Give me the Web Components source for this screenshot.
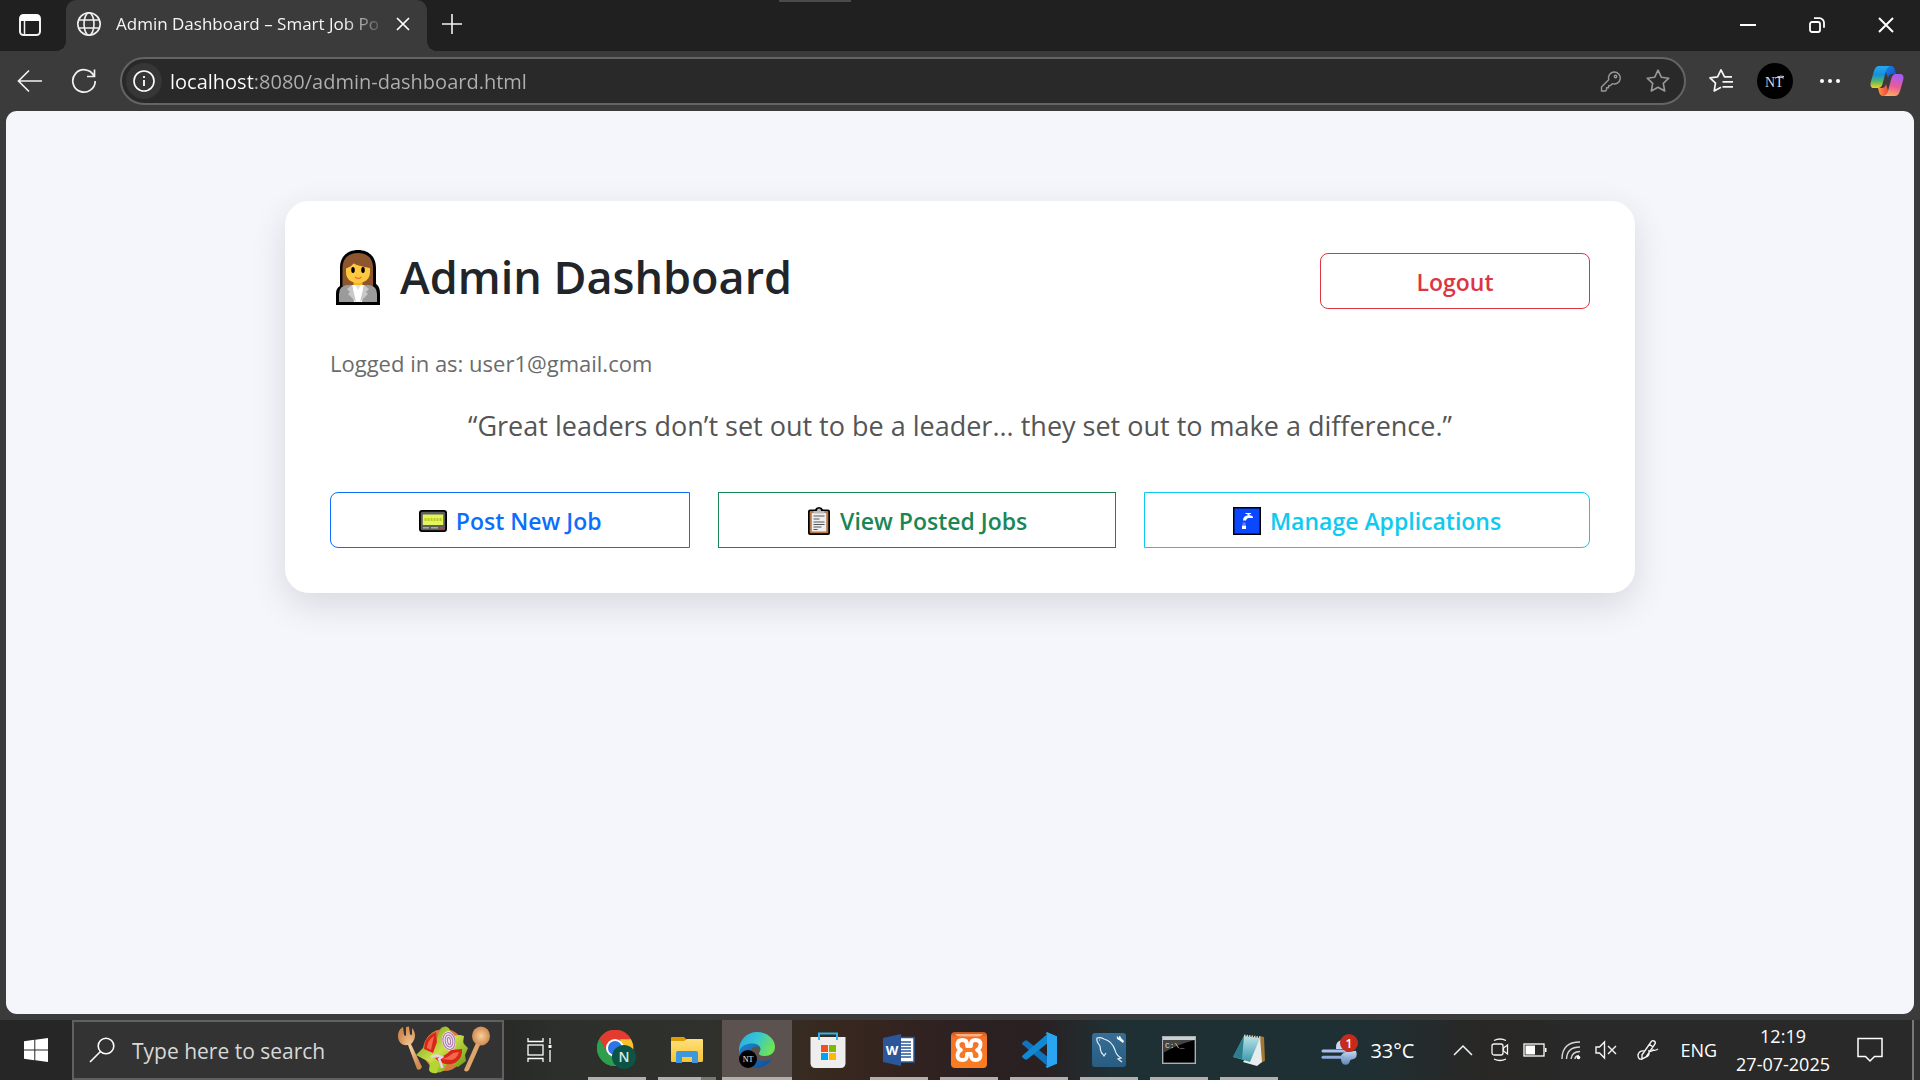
<!DOCTYPE html>
<html lang="en">
<head>
<meta charset="utf-8">
<title>Admin Dashboard – Smart Job Portal</title>
<style>
  html, body { margin: 0; height: 100%; }
  body { font-family: "Open Sans", "Noto Sans", sans-serif; background: #3b3b3b; overflow: hidden; }
</style>
</head>
<body>
<desktop-screen></desktop-screen>
<script>
const ICONS = {
  workspaces: [24, 24, `<g fill="none" stroke="#f2f2f2" stroke-width="2"><rect x="2" y="2" width="20" height="20" rx="3.5"/><path d="M6.5 7v15" stroke-width="1.5"/></g><path d="M2 8V5a3.500 3.500 0 0 1 3.500-3.500h13A3.500 3.500 0 0 1 22 5v3z" fill="#fff"/>`],
  globe: [26, 26, `<g fill="none" stroke="#f0f0f0" stroke-width="1.6"><circle cx="13" cy="13" r="11.2"/><ellipse cx="13" cy="13" rx="5" ry="11.200"/><path d="M3 9h20M3 17h20"/></g>`],
  tabclose: [16, 16, `<path d="M2 2l12 12M14 2L2 14" stroke="#fff" stroke-width="1.7" fill="none"/>`],
  plus: [22, 22, `<path d="M11 1v20M1 11h20" stroke="#f2f2f2" stroke-width="1.6" fill="none"/>`],
  minimize: [16, 16, `<path d="M0 8h16" stroke="#fff" stroke-width="2"/>`],
  restore: [18, 18, `<g fill="none" stroke="#fff" stroke-width="1.8"><rect x="2" y="6" width="10" height="10" rx="2"/><path d="M6 2.200h5.500a4.500 4.500 0 0 1 4.500 4.500v5" /></g>`],
  close: [18, 18, `<path d="M2 2l14 14M16 2L2 16" stroke="#fff" stroke-width="2" fill="none"/>`],
  back: [26, 24, `<path d="M25 12H2M12 1.500L1.500 12 12 22.500" stroke="#f2f2f2" stroke-width="1.700" fill="none"/>`],
  reload: [26, 26, `<path d="M22.800 7.500A11.200 11.200 0 1 0 24.200 13M23.500 1.500v7h-7.500" stroke="#f2f2f2" stroke-width="1.700" fill="none"/>`],
  info: [36, 36, `<circle cx="18" cy="18" r="18" fill="#363636"/><circle cx="18" cy="18" r="10" fill="none" stroke="#fff" stroke-width="1.600"/><path d="M18 17v6M18 13v2" stroke="#fff" stroke-width="1.800"/>`],
  key: [22, 22, `<g fill="none" stroke="#999" stroke-width="1.400" stroke-linejoin="round"><path d="M14 2a6 6 0 1 1-1.600 11.700L10.500 15.600H8.600v2.100H6.500v2.200L5.500 21H1.500v-4l7.200-7.200A6 6 0 0 1 14 2z"/><circle cx="15.500" cy="6.500" r="1.200"/></g>`],
  star: [26, 26, `<path d="M13 2.200l3.300 7 7.500 1-5.500 5.200 1.400 7.600L13 19.300 6.300 23l1.400-7.600L2.200 10.200l7.500-1z" fill="none" stroke="#999" stroke-width="1.600" stroke-linejoin="round"/>`],
  favorites: [26, 26, `<path d="M24 8.800h-7.500L13 1.800l-3.400 7-7.600 1.100 5.500 5.300-1.300 7.700L13 19.300M14.500 13.800H25M14.500 18.800H25" fill="none" stroke="#f5f5f5" stroke-width="1.700" stroke-linejoin="round"/>`],
  avatar: [36, 36, `<circle cx="18" cy="18" r="18" fill="#000"/><text x="8" y="24" font-family="Liberation Serif" font-size="14" fill="#d8d8d8">NT</text><path d="M20 14q4-1.500 7-.5" stroke="#d8d8d8" fill="none"/>`],
  dots: [20, 6, `<g fill="#fff"><circle cx="2" cy="3" r="2"/><circle cx="10" cy="3" r="2"/><circle cx="18" cy="3" r="2"/></g>`],
  copilot: [34, 32, `<defs><linearGradient id="a" x1="0" y1="0" x2="0" y2="1"><stop offset="0" stop-color="#27a7f5"/><stop offset=".4" stop-color="#1690d8"/><stop offset=".7" stop-color="#58b86a"/><stop offset="1" stop-color="#f8d11c"/></linearGradient><linearGradient id="b" x1=".3" y1="0" x2=".1" y2="1"><stop offset="0" stop-color="#a45cf5"/><stop offset=".5" stop-color="#ee5a96"/><stop offset="1" stop-color="#ffb45a"/></linearGradient><linearGradient id="c" x1="0" y1="0" x2="1" y2="1"><stop offset="0" stop-color="#1a8ae8"/><stop offset="1" stop-color="#1648c8"/></linearGradient><linearGradient id="d" x1="0" y1="0" x2="1" y2="0"><stop offset="0" stop-color="#ff9a3a"/><stop offset="1" stop-color="#e8334a"/></linearGradient></defs><path d="M14 1h7q3 0 4 4l1 4h-4q-3 0-4 4z" fill="url(#c)"/><path d="M20 31h-7q-3 0-4-4l-1-4h4q3 0 4-4z" fill="url(#d)"/><path d="M9 1h11q-3 1-4 5l-3.500 13q-1.200 4-4.500 4H4Q-.5 23 .8 17L4 6Q5.500 1 9 1z" fill="url(#a)"/><path d="M25 31H14q3-1 4-5l3.500-13q1.200-4 4.500-4h4q4.500 0 3.200 6L30 26q-1.500 5-5 5z" fill="url(#b)"/>`],
  admin: [46, 56, `<path d="M5 37V19C5 7 13 1 23 1s18 6 18 18v16c3 2 4 5 4 10v11H1V45c0-4 1-6 4-8z" fill="#000"/><path d="M7.500 37V19C7.500 9 14 4 23 4s15 5 15 15v18z" fill="#8e562e"/><path d="M18.500 28h9v12h-9z" fill="#f5b51b"/><path d="M11 19q5-1 7-5 5 3 17 5v4c0 7-5 11-12 11s-12-4-12-11z" fill="#ffc83d"/><path d="M10 20V14q4-6 13-6t13 6v6l-4-3-1-2-2 2-7-1-3-2-3 3z" fill="#8e562e"/><ellipse cx="18" cy="21" rx="1.800" ry="3"/><ellipse cx="28" cy="21" rx="1.800" ry="3"/><path d="M20 28q3 3 6.500 0" stroke="#e27746" stroke-width="1.300" fill="none"/><path d="M4 53v-8q0-8 8-9h22q8 1 8 9v8z" fill="#9b9b9b"/><path d="M17 36h12l-2 17h-8z" fill="#fff"/><path d="M17 36l-5 4 3 3-2 2 8 8-4-17zM29 36l5 4-3 3 2 2-8 8 4-17z" fill="#c8c8c8"/><path d="M20 36l3 5 3-5z" fill="#e2e2e2"/>`],
  pager: [28, 22, `<rect width="28" height="22" rx="3" fill="#000"/><rect x="1.800" y="1.800" width="24.400" height="18.400" rx="1.500" fill="#5e5e5e"/><rect x="3.800" y="4.500" width="20.400" height="10.500" fill="#e2f65b"/><path d="M5.500 9.500h17" stroke="#bcc92a" stroke-width="3" stroke-dasharray="2 1"/><path d="M4 17.700h6M12 17.700h7" stroke="#aaa" stroke-width="1.600"/><path d="M21 17.700h3" stroke="#e23b2e" stroke-width="1.600"/>`],
  clipboard: [24, 28, `<path d="M3 2.500h5q1-2.500 4-2.500t4 2.500h5q2 0 2 2V26q0 2-2 2H3q-2 0-2-2V4.500q0-2 2-2z" fill="#000"/><rect x="2.700" y="4" width="18.600" height="22.300" rx="1" fill="#b57b4e"/><rect x="4.800" y="6" width="14.400" height="18.500" fill="#f0f0f0"/><path d="M6.500 6.500V4h3.300Q10 1.500 12 1.500T14.200 4h3.300v2.500z" fill="#bbb"/><path d="M6.500 9h11M6.500 12h6M6.500 15h11M6.500 17.500h11M6.500 20h8M6.500 22.500h4" stroke="#555" stroke-width="1"/>`],
  tap: [28, 28, `<rect width="28" height="28" fill="#000"/><rect x="1.500" y="1.500" width="25" height="25" fill="#0a47ff"/><path d="M10 13.500q0-4.500 4.500-5V7h-2V6h5.500v1h-1.500v1.300q3 0 3.500 1.700v1h-4.500q-2 0-2.500 2.500z" fill="#fff"/><path d="M9.500 15.500h3V18h-3z" fill="#5f88ff"/><path d="M9 18.500h4V22H9z" fill="#fff"/>`],
  windows: [24, 24, `<path d="M0 3.300L10.300 1.800v9.700H0zM11.300 1.700L24 0v11.500H11.300zM0 12.500h10.300v9.700L0 20.700zM11.300 12.500H24V24l-12.700-1.700z" fill="#fff"/>`],
  search: [26, 26, `<g fill="none" stroke="#fff" stroke-width="1.600"><circle cx="17" cy="9" r="7.800"/><path d="M11.500 14.500L1 25"/></g>`],
  salad: [94, 48, `<defs><radialGradient id="w"><stop offset="0" stop-color="#f7cf9c"/><stop offset="1" stop-color="#cf8b50"/></radialGradient><linearGradient id="l" x1="0" y1="0" x2="1" y2="1"><stop offset="0" stop-color="#6a8f0f"/><stop offset=".5" stop-color="#c9e04a"/><stop offset="1" stop-color="#5f8d0d"/></linearGradient></defs><path d="M1 10C1 5 4 2 6 1l1 8 2 1V1l3-.500 1 8 2 .500V2c3 3 4 8 2 12-1 2-2 3-3 4l11 23q-2 4-5 2L11 19C5 20 1 16 1 10z" fill="url(#w)"/><ellipse cx="84" cy="10" rx="9" ry="9.500" fill="url(#w)"/><path d="M79 17l4 2-11 25q-3 3-5 0z" fill="#e0a56b"/><ellipse cx="47" cy="24" rx="21" ry="21" fill="#d57a3d"/><path d="M44 2q6-4 9 2l2 6 8-1 4 1-1 7 5 5-3 7 1 6-8 6-10-5-5 9q-5 3-11 0l-3-9-13-7 8-8 4-10 8 3z" fill="url(#l)"/><path d="M39 6q-12 5-12 17l9 4 4-11z" fill="#d82717"/><path d="M37 10q-7 5-7 12l4 2z" fill="#f4674d"/><ellipse cx="52" cy="15" rx="7" ry="10" transform="rotate(-10 52 15)" fill="#efe3ee"/><g fill="none" stroke="#a874a3" stroke-width="1" transform="rotate(-10 52 15)"><ellipse cx="52" cy="15" rx="6" ry="8.500"/><ellipse cx="52" cy="15" rx="3.800" ry="6"/><ellipse cx="52" cy="15" rx="1.500" ry="3.500"/></g><path d="M38 32q10-1 16-8l11-1q1 9-7 14-12 4-20-5z" fill="#d82717"/><path d="M44 33q7-1 12-6l6-1q-2 7-8 8z" fill="#f4674d"/><path d="M34 31q5-3 11 0l-3 2q3 6 3 9" stroke="#e7d3e5" stroke-width="2.500" fill="none"/><path d="M33 37q6-4 9 2l-2 8q-6 1-8-3z" fill="#b6d531"/>`],
  taskview: [26, 24, `<g fill="none" stroke="#fff" stroke-width="1.300"><rect x="1" y="7" width="15" height="10"/><path d="M1 0v3.500h15V0M1 24v-3.500h15V24M23 0v6M23 12v12"/></g><rect x="21.500" y="7" width="3" height="3" fill="#fff"/>`],
  chrome: [40, 40, `<circle cx="18" cy="18" r="18" fill="#2f9e4f"/><path d="M2.400 9A18 18 0 0 1 34 9.200H18L10 22z" fill="#e33b2e"/><path d="M34 9.200A18 18 0 0 1 18 36l8-14-3-12.800z" fill="#fbc02d"/><path d="M2.400 9L10.500 22.500 18 36A18 18 0 0 1 2.400 9z" fill="#2f9e4f"/><circle cx="18" cy="18" r="9" fill="#fff"/><circle cx="18" cy="18" r="7" fill="#2d74e8"/><circle cx="27" cy="27" r="12" fill="#0b5446"/><text x="27" y="32" font-family="Open Sans" font-size="14" font-weight="600" text-anchor="middle" fill="#d6e8e2">N</text>`],
  explorer: [34, 28, `<defs><linearGradient id="f" x1="0" y1="0" x2="0" y2="1"><stop offset="0" stop-color="#ffdf7c"/><stop offset="1" stop-color="#f8c431"/></linearGradient></defs><path d="M1 10V2q0-1 1-1h12l3 3v6z" fill="#dd9e05"/><path d="M1 5h13l3-2h15q1 0 1 1v20q0 2-1 2H2q-1 0-1-1z" fill="url(#f)"/><path d="M6 27V17q0-2 2-2h18q2 0 2 2v10h-6v-6H12v6z" fill="#3c97dc"/>`],
  edge: [38, 38, `<defs><linearGradient id="e" x1="0" y1="0" x2="1" y2=".4"><stop offset="0" stop-color="#2aa7df"/><stop offset=".5" stop-color="#35c4d8"/><stop offset="1" stop-color="#6be35a"/></linearGradient><linearGradient id="h" x1="0" y1="0" x2="1" y2="1"><stop offset="0" stop-color="#1f86d0"/><stop offset="1" stop-color="#0f4c98"/></linearGradient></defs><path d="M1 21c0-5 5-10 11-10 5 0 9 3 10.500 6-1-1-2-1.500-4-1.500-5 0-6 5-6 7 1 7 12 9 21.500 5.500-3 5-9 9-15 9C9 37 1 30 1 21z" fill="url(#h)"/><path d="M1 19C1 9 9 1 19 1s18 7 18 15c0 6-5 9-10 9-4 0-6-1-6-2.500 0-1 1.500-2 1.500-4.500 0-3-3-5.500-8-5.500C8 12.500 1 15 1 23z" fill="url(#e)"/><circle cx="10" cy="28" r="9" fill="#000"/><text x="10" y="31" font-size="8" text-anchor="middle" font-family="Liberation Serif" fill="#eee">NT</text>`],
  store: [36, 36, `<path d="M9 8V1.500h18V8" stroke="#2cb5ec" stroke-width="2" fill="none"/><path d="M.5 5h35v26q0 5-5 5h-25q-5 0-5-5z" fill="#eee"/><path d="M9 5v3M27 5v3" stroke="#2cb5ec" stroke-width="2"/><path d="M11 13h7v7h-7z" fill="#f25022"/><path d="M19 13h7v7h-7z" fill="#7fba00"/><path d="M11 21h7v7h-7z" fill="#00a4ef"/><path d="M19 21h7v7h-7z" fill="#ffb900"/>`],
  word: [34, 32, `<path d="M18 3.500h14V28H18z" fill="#fff" stroke="#2b579a" stroke-width="1.500"/><path d="M19 8h10M19 11h10M19 14h10M19 17h10M19 20h10M19 23h10" stroke="#2b579a" stroke-width="1.300"/><path d="M1 4l18-4v32L1 28z" fill="#2b579a"/><text x="10" y="21" font-family="Open Sans" font-weight="700" font-size="13" text-anchor="middle" fill="#fff">W</text>`],
  xampp: [36, 36, `<defs><linearGradient id="x" x1="0" y1="0" x2="0" y2="1"><stop offset="0" stop-color="#c8561a"/><stop offset=".15" stop-color="#f3732a"/><stop offset="1" stop-color="#fa7d20"/></linearGradient></defs><rect width="36" height="36" rx="4" fill="url(#x)"/><path d="M4 2h28q-2 2.500-5 2.500H9Q6 4.500 4 2z" fill="#f8b288"/><path d="M10 18q-3.500-1.500-3.500-5.500 0-4.500 5-4.500 4.500 0 4.500 4.500v1.500h4v-1.500q0-4.500 4.500-4.500 5 0 5 4.500 0 4-3.500 5.500 3.500 1.500 3.500 5.500 0 4.500-5 4.500-4.500 0-4.500-4.500V22h-4v1.500q0 4.500-4.500 4.500-5 0-5-4.500 0-4 3.500-5.500z" fill="none" stroke="#fff" stroke-width="3.800" stroke-linejoin="round"/>`],
  vscode: [36, 36, `<path d="M1 11l3-2.500h2L28 26v9.500L1.500 12.500z" fill="#0f73bd"/><path d="M1 25l3 2.500h2L28 10V.5L1.500 23.500z" fill="#1288d2"/><path d="M26 .3L36 4.500v27L26 35.700l-1.500-1L27 33V3l-2.500-1.700z" fill="#2eaaf4"/><path d="M26 .3L36 4.500v27L26 35.700z" fill="#2aa5f2"/>`],
  mysql: [34, 34, `<defs><linearGradient id="m" x1="0" y1="0" x2="0" y2="1"><stop offset="0" stop-color="#386d96"/><stop offset="1" stop-color="#285c80"/></linearGradient></defs><rect width="34" height="34" rx="3" fill="url(#m)"/><path d="M10 21q-2-4-2-8-4-5-3-8 3-1 7 1 8 2 11 11 1 5 6 8l-3 1 4 3M10 20l2 3 2-3M7 7h1" fill="none" stroke="#e6f0f7" stroke-width="1.200"/><path d="M25 3q-1 3 2 4l4 3 1-2-3-3q0-2-2-2l0 2z" fill="#fff"/>`],
  cmd: [34, 28, `<rect x=".7" y=".7" width="32.600" height="26.600" fill="#000" stroke="#a9b0b4" stroke-width="1.400"/><path d="M1 1h32v3H1z" fill="#c8d0d4"/><path d="M1 4h32Q14 9 1 17z" fill="#444"/><text x="3" y="12" font-size="8" font-family="Liberation Mono" fill="#ddd">C:\\_</text>`],
  notepad: [36, 34, `<defs><linearGradient id="n" x1="0" y1="0" x2="0" y2="1"><stop offset="0" stop-color="#b9e3ea"/><stop offset="1" stop-color="#3d98a8"/></linearGradient></defs><path d="M28 3l5 1 1 24-5 2z" fill="#a2792e"/><path d="M29 4l2 25-5 4-14-4z" fill="#e8ecec"/><path d="M13 3l16 2-10 24L2 24z" fill="url(#n)"/><path d="M2 24L13 3l-2 23z" fill="#2c7e8e"/><path d="M13 3l17 2" stroke="#ccc" stroke-width="3" stroke-dasharray="1.500 1"/>`],
  weather: [38, 32, `<defs><linearGradient id="g" x1="0" y1="0" x2="0" y2="1"><stop offset="0" stop-color="#c6d8f4"/><stop offset="1" stop-color="#5d88b8"/></linearGradient></defs><path d="M2 17h22" stroke="#a9c0ea" stroke-width="3" stroke-linecap="round"/><path d="M15 15q-1-8 6-9l4 9z" fill="#c6d8f4"/><path d="M20 21.700q2-4 8-4l7-1q3 8-5 9-1 0-1 1-1 4-4 4-5 0-5-6z" fill="url(#g)"/><path d="M2 23.200h20" stroke="#8fabd8" stroke-width="3" stroke-linecap="round"/><circle cx="28" cy="9" r="9" fill="#c42b1c"/><text x="28" y="13.500" font-size="12" font-weight="600" font-family="Open Sans" text-anchor="middle" fill="#fff">1</text>`],
  chevron: [20, 12, `<path d="M1 11l9-9 9 9" fill="none" stroke="#f4f4f4" stroke-width="1.500"/>`],
  camera: [18, 24, `<g fill="none" stroke="#f4f4f4" stroke-width="1.300"><rect x="1" y="6" width="11" height="11" rx="2"/><path d="M12.500 10l4-3v9l-4-3zM3 2.500q6-3 12 0M3 21q6 3 12 0"/></g>`],
  battery: [24, 14, `<rect x="1" y="1" width="20" height="12" fill="none" stroke="#fff" stroke-width="1.300"/><path d="M22 5h1.500v4H22z" fill="#fff"/><path d="M2.500 2.500h9.500v9H2.500z" fill="#fff"/>`],
  wifi: [20, 20, `<g fill="none" stroke="#d8d8d8" stroke-width="1.400"><path d="M1 19Q1 2 19 2M5.500 19Q6 7 19 7M10 19q1-7.500 9-7.500"/><path d="M14 19q0-3 4-3.500"/></g><circle cx="17.500" cy="17.500" r="1.800" fill="#fff"/>`],
  mute: [22, 20, `<g fill="none" stroke="#f4f4f4" stroke-width="1.400"><path d="M1 7h3.500L9.500 2v16l-5-5H1zM13 6l8 8M21 6l-8 8"/></g>`],
  pen: [22, 22, `<g fill="none" stroke="#f4f4f4" stroke-width="1.400"><path d="M5 16L14 3q1-2 3-1t1 3L9 18l-4 2zM8 12q-6-1-7 4 0 5 4 4M9 18q4-1 3-6 3 1 4-1 2 1 5-1M12 5l4 3"/></g>`],
  notification: [26, 26, `<path d="M1 1.500h24v18h-7.500l-4.500 4.500-4.500-4.500H1z" fill="none" stroke="#fff" stroke-width="1.500"/>`]
};

function define(name, css, html) {
  const template = document.createElement('template');
  template.innerHTML = `<style>*{box-sizing:border-box}button,input{font:inherit;color:inherit;background:none;border:0;margin:0;padding:0;outline:0}button{display:grid;place-items:center}${css}</style>${html}`;
  customElements.define(name, class extends HTMLElement {
    constructor() {
      super();
      this.attachShadow({ mode: 'open' }).append(template.content.cloneNode(true));
    }
  });
}

customElements.define('ui-icon', class extends HTMLElement {
  connectedCallback() {
    if (this.shadowRoot) return;
    const [w, h, body] = ICONS[this.getAttribute('name')];
    this.attachShadow({ mode: 'open' }).innerHTML =
      `<style>:host{display:block;flex:none}svg{display:block}</style><svg width="${w}" height="${h}" viewBox="0 0 ${w} ${h}" aria-hidden="true">${body}</svg>`;
  }
});

define('window-tabs', `
  :host { display: flex; align-items: stretch; height: 51px; flex: none; background: #202020; position: relative; color: #f5f5f5; }
  .workspaces { width: 66px; padding: 0 6px 2px 0; }
  .tab { position: relative; width: 361px; display: flex; align-items: center; gap: 14px; padding: 0 16px 3px 10px; background: #3b3b3b; border-radius: 10px 10px 0 0; }
  .tab::before, .tab::after { content: ""; position: absolute; bottom: 0; width: 10px; height: 10px; }
  .tab::before { left: -10px; background: radial-gradient(circle at 0 0, transparent 10px, #3b3b3b 10px); }
  .tab::after { right: -10px; background: radial-gradient(circle at 100% 0, transparent 10px, #3b3b3b 10px); }
  .title { flex: 1; min-width: 0; overflow: hidden; white-space: nowrap; font-size: 17px; line-height: 24px; -webkit-mask-image: linear-gradient(90deg, #000 86%, transparent 102%); }
  .new { width: 50px; padding-bottom: 4px; }
  .handle { position: absolute; left: 50%; top: 0; width: 72px; height: 2px; margin-left: -181px; background: #4a4a4a; }
  .controls { margin-left: auto; display: flex; }
  .controls button { width: 69px; padding-bottom: 1px; }
`, `
  <button class="workspaces" aria-label="Workspaces"><ui-icon name="workspaces"></ui-icon></button>
  <div class="tab"><ui-icon name="globe"></ui-icon><span class="title">Admin Dashboard – Smart Job Po</span><button aria-label="Close tab"><ui-icon name="tabclose"></ui-icon></button></div>
  <button class="new" aria-label="New tab"><ui-icon name="plus"></ui-icon></button>
  <div class="handle"></div>
  <div class="controls">
    <button aria-label="Minimize"><ui-icon name="minimize"></ui-icon></button>
    <button aria-label="Restore"><ui-icon name="restore"></ui-icon></button>
    <button aria-label="Close"><ui-icon name="close"></ui-icon></button>
  </div>
`);

define('address-bar', `
  :host { display: flex; align-items: center; height: 60px; flex: none; background: #3b3b3b; padding: 0 16px 0 17px; }
  .nav { display: flex; gap: 28px; margin-right: 23px; }
  .field { flex: 1; height: 48px; display: flex; align-items: center; gap: 8px; padding: 0 13px 0 4px; background: #292929; border: 2px solid #646464; border-radius: 24px; }
  input { flex: 1; min-width: 0; height: 32px; font-size: 20px; color: transparent; background: linear-gradient(90deg, #fff var(--host-width), #b0b0b0 0); -webkit-background-clip: text; background-clip: text; }
  .field button + button { margin-left: 15px; }
  .tools { display: flex; align-items: center; gap: 23px; margin-left: 22px; }
  .tools .more { margin: 0 7px 0 4px; }
`, `
  <div class="nav"><button aria-label="Back"><ui-icon name="back"></ui-icon></button><button aria-label="Reload"><ui-icon name="reload"></ui-icon></button></div>
  <div class="field">
    <button aria-label="Site information"><ui-icon name="info"></ui-icon></button>
    <input type="text" aria-label="Address" value="localhost:8080/admin-dashboard.html" style="--host-width:85px" spellcheck="false">
    <button aria-label="Passwords"><ui-icon name="key"></ui-icon></button>
    <button aria-label="Add to favorites"><ui-icon name="star"></ui-icon></button>
  </div>
  <div class="tools">
    <button aria-label="Favorites"><ui-icon name="favorites"></ui-icon></button>
    <button aria-label="Profile"><ui-icon name="avatar"></ui-icon></button>
    <button class="more" aria-label="Settings and more"><ui-icon name="dots"></ui-icon></button>
    <button aria-label="Copilot"><ui-icon name="copilot"></ui-icon></button>
  </div>
`);

define('outline-button', `
  :host { display: flex; color: var(--tone); }
  button { flex: 1; height: 56px; display: flex; align-items: center; justify-content: center; gap: 9px; padding: 2px 16px 0; border: 1px solid var(--tone); border-radius: var(--corners, 8px); font-size: 23px; line-height: 34px; font-weight: 600; white-space: nowrap; cursor: pointer; }
`, `<button type="button"><slot name="icon"></slot><slot></slot></button>`);

define('admin-card', `
  :host { display: block; box-sizing: border-box; width: 100%; max-width: 1350px; padding: 45px; background: #fff; border-radius: 24px; box-shadow: 0 12px 36px rgba(0,0,0,.12); }
  header { display: flex; align-items: center; justify-content: space-between; height: 70px; }
  h1 { margin: 0 0 9px; display: flex; align-items: center; gap: 19px; padding-left: 5px; font-size: 45px; line-height: 58px; font-weight: 600; color: #212529; }
  header outline-button { width: 270px; }
  .user { margin: 31px 0 0; font-size: 22px; line-height: 32px; color: #6b6b6b; }
  .quote { margin: 25px 0 45px; text-align: center; font-size: 27px; line-height: 43px; color: #555; }
  .actions { display: flex; gap: 28px; }
  .actions outline-button { flex: 1 1 auto; }
`, `
  <header>
    <h1><ui-icon name="admin"></ui-icon>Admin Dashboard</h1>
    <outline-button style="--tone:#dc3545">Logout</outline-button>
  </header>
  <p class="user">Logged in as: user1@gmail.com</p>
  <p class="quote">“Great leaders don’t set out to be a leader... they set out to make a difference.”</p>
  <div class="actions">
    <outline-button style="--tone:#0d6efd;--corners:8px 0 0 8px"><ui-icon slot="icon" name="pager"></ui-icon>Post New Job</outline-button>
    <outline-button style="--tone:#198754;--corners:0"><ui-icon slot="icon" name="clipboard"></ui-icon>View Posted Jobs</outline-button>
    <outline-button style="--tone:#0dcaf0;--corners:0 8px 8px 0"><ui-icon slot="icon" name="tap"></ui-icon>Manage Applications</outline-button>
  </div>
`);

define('task-app', `
  :host { display: flex; width: 70px; }
  button { flex: 1; position: relative; }
  :host([active]) { background: #5c5350; }
  button::after { content: ""; position: absolute; left: 6px; right: 6px; bottom: 0; height: 3px; background: #b3afac; }
  :host([active]) button::after { left: 0; right: 0; }
  :host([stacked]) button::after { background: linear-gradient(90deg, #b3afac 43px, #7a7876 43px); }
  :host([idle]) { width: 72px; }
  :host([idle]) button::after { display: none; }
`, `<button><slot></slot></button>`);

define('task-bar', `
  :host { display: flex; height: 60px; flex: none; color: #fff; background: linear-gradient(90deg, #262626 0, #262626 24%, #2c2f2b 29%, #30312c 37%, #38291f 43%, #35241f 46%, #2b2022 51%, #2a2022 54%, #1f3034 58%, #1f3034 71%, #282725 77%, #292929 82%); }
  .start { width: 72px; }
  label { width: 432px; display: flex; align-items: center; padding: 0 11px 0 15px; background: #333; border: 2px solid #606060; }
  label input { flex: 1; min-width: 0; margin-left: 17px; height: 32px; padding-top: 2px; font-size: 21px; }
  label input::placeholder { color: #d8d8d8; opacity: 1; }
  .view { width: 78px; padding-right: 6px; }
  .apps { display: flex; }
  .tray { margin-left: auto; display: flex; align-items: center; }
  .weather { display: flex; align-items: center; gap: 11px; margin-right: 39px; font-size: 20px; }
  .icons { display: flex; align-items: center; gap: 14px; margin-right: 21px; }
  .icons .more { margin-right: 4px; }
  .icons .ink { margin-left: 6px; }
  .lang { font-size: 18px; margin-right: 19px; }
  .clock { font-size: 18px; line-height: 28px; text-align: center; margin-right: 27px; }
  .desktop { width: 8px; align-self: stretch; margin-left: 29px; border-left: 2px solid #777; background: #303030; }
`, `
  <button class="start" aria-label="Start"><ui-icon name="windows"></ui-icon></button>
  <label><ui-icon name="search"></ui-icon><input type="text" placeholder="Type here to search" aria-label="Search"><ui-icon name="salad"></ui-icon></label>
  <button class="view" aria-label="Task view"><ui-icon name="taskview"></ui-icon></button>
  <div class="apps">
    <task-app><ui-icon name="chrome"></ui-icon></task-app>
    <task-app stacked><ui-icon name="explorer"></ui-icon></task-app>
    <task-app active><ui-icon name="edge"></ui-icon></task-app>
    <task-app idle><ui-icon name="store"></ui-icon></task-app>
    <task-app><ui-icon name="word"></ui-icon></task-app>
    <task-app><ui-icon name="xampp"></ui-icon></task-app>
    <task-app><ui-icon name="vscode"></ui-icon></task-app>
    <task-app><ui-icon name="mysql"></ui-icon></task-app>
    <task-app><ui-icon name="cmd"></ui-icon></task-app>
    <task-app><ui-icon name="notepad"></ui-icon></task-app>
  </div>
  <div class="tray">
    <button class="weather" aria-label="Weather"><ui-icon name="weather"></ui-icon><span>33°C</span></button>
    <div class="icons">
      <button class="more" aria-label="Hidden icons"><ui-icon name="chevron"></ui-icon></button>
      <button aria-label="Meet now"><ui-icon name="camera"></ui-icon></button>
      <button aria-label="Battery"><ui-icon name="battery"></ui-icon></button>
      <button aria-label="Network"><ui-icon name="wifi"></ui-icon></button>
      <button aria-label="Volume"><ui-icon name="mute"></ui-icon></button>
      <button class="ink" aria-label="Ink workspace"><ui-icon name="pen"></ui-icon></button>
    </div>
    <button class="lang">ENG</button>
    <div class="clock"><div>12:19</div><div>27-07-2025</div></div>
    <button aria-label="Notifications"><ui-icon name="notification"></ui-icon></button>
    <div class="desktop"></div>
  </div>
`);

define('desktop-screen', `
  :host { display: flex; flex-direction: column; height: 100vh; background: #3b3b3b; }
  main { flex: 1; min-height: 0; margin: 0 6px 6px; padding: 90px 24px 24px; background: #f4f6fb; border-radius: 11px; display: flex; justify-content: center; align-items: flex-start; overflow: hidden; }
`, `<window-tabs></window-tabs><address-bar></address-bar><main><admin-card></admin-card></main><task-bar></task-bar>`);
</script>
</body>
</html>
